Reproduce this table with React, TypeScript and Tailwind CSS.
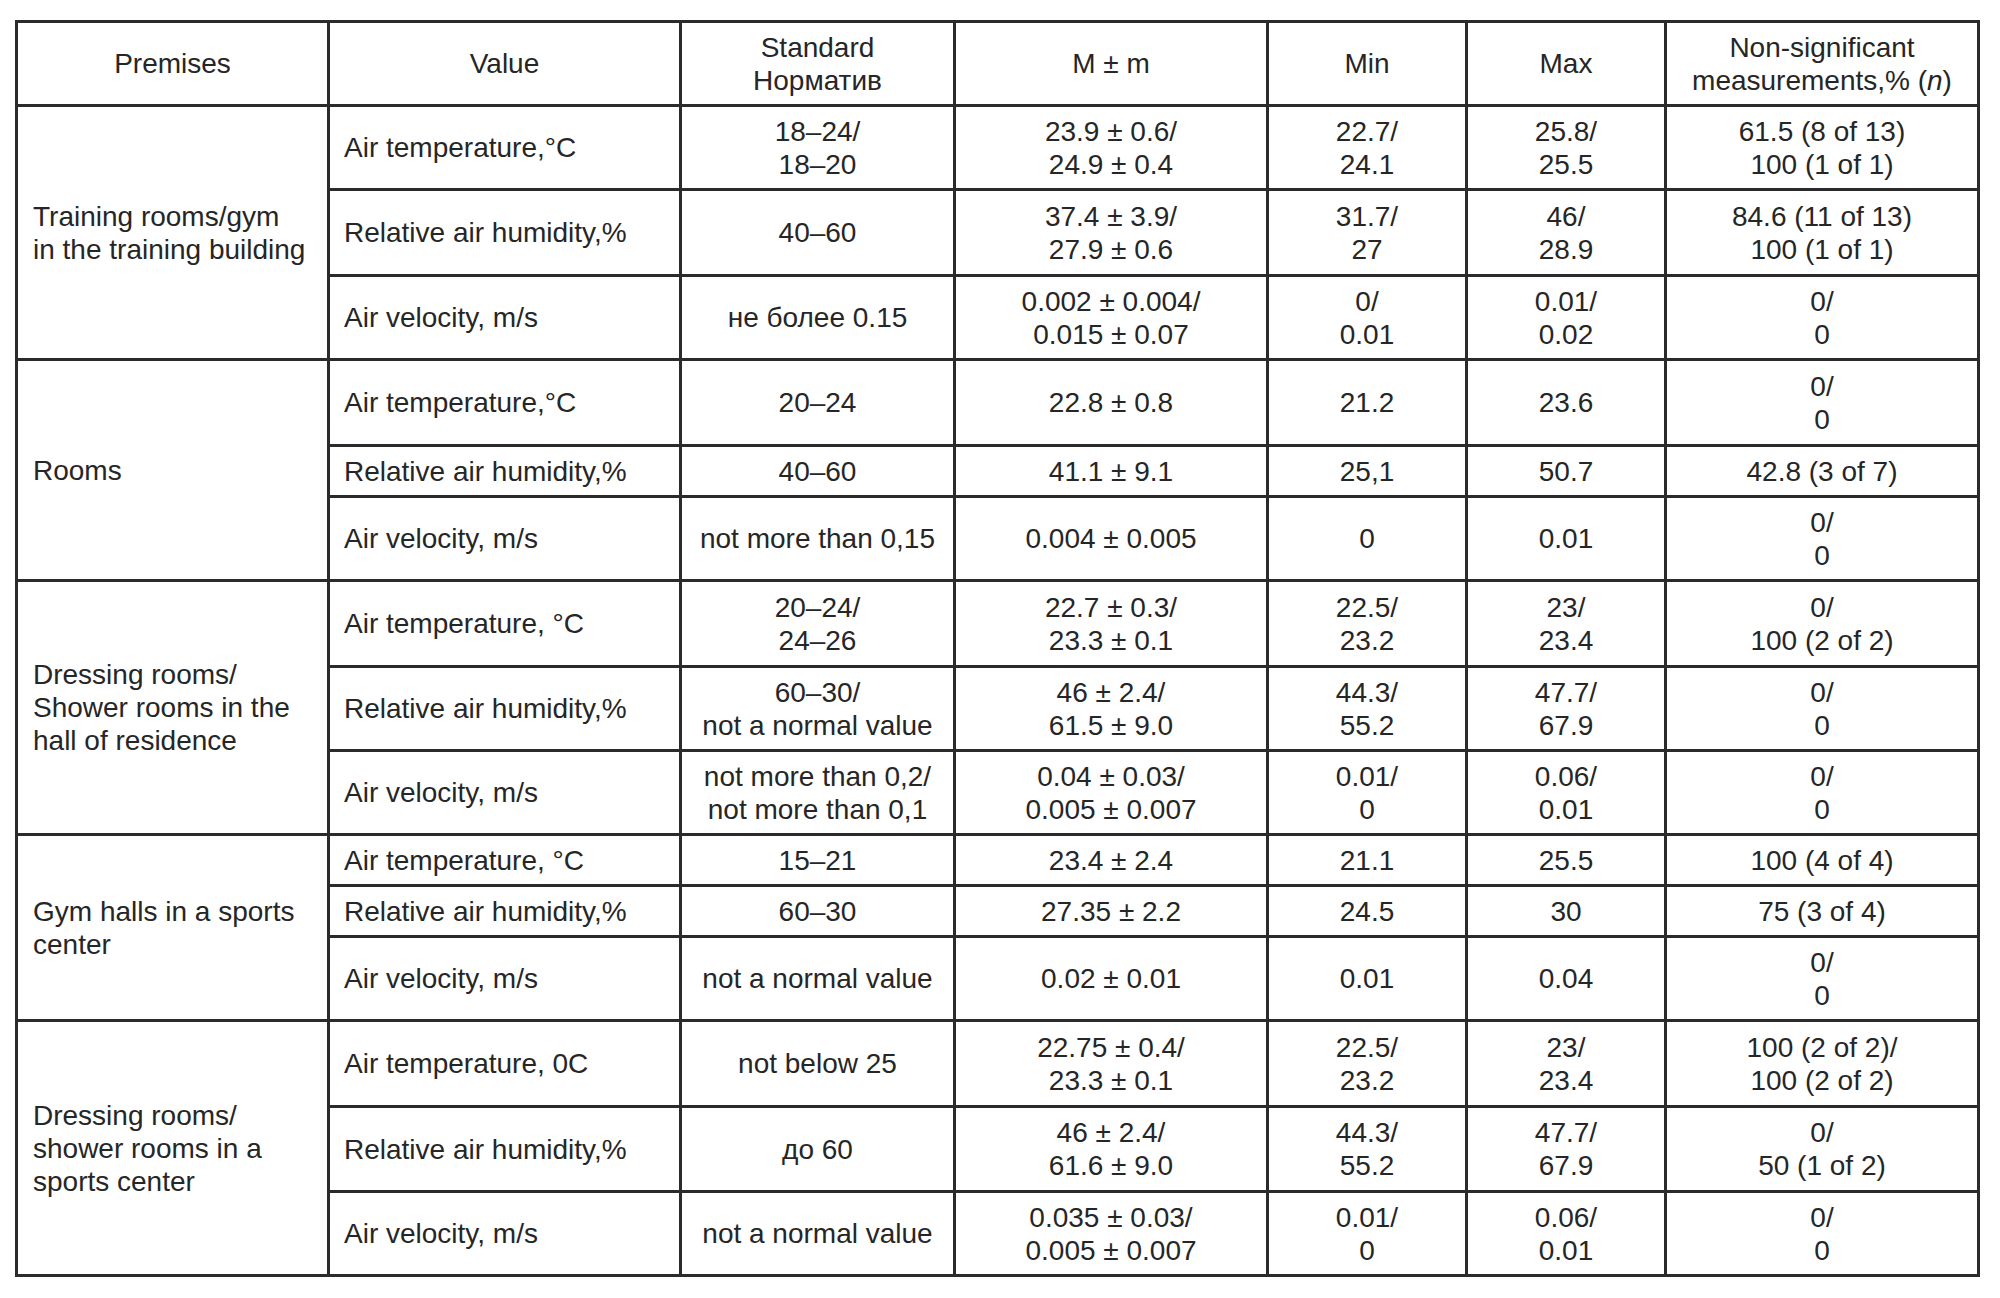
import React from 'react';

// ─── Data ───────────────────────────────────────────────────────────────────
interface MeasureRow {
  value: string;
  standard: string[];
  mean: string[];
  min: string[];
  max: string[];
  nonSig: string[];
  h: string;
}

interface PremisesGroup {
  name: string[];
  rows: MeasureRow[];
}

const groups: PremisesGroup[] = [
  {
    name: ['Training rooms/gym', 'in the training building'],
    rows: [
      { value: 'Air temperature,°C', standard: ['18–24/', '18–20'], mean: ['23.9 ± 0.6/', '24.9 ± 0.4'], min: ['22.7/', '24.1'], max: ['25.8/', '25.5'], nonSig: ['61.5 (8 of 13)', '100 (1 of 1)'], h: 'h-[84px]' },
      { value: 'Relative air humidity,%', standard: ['40–60'], mean: ['37.4 ± 3.9/', '27.9 ± 0.6'], min: ['31.7/', '27'], max: ['46/', '28.9'], nonSig: ['84.6 (11 of 13)', '100 (1 of 1)'], h: 'h-[86px]' },
      { value: 'Air velocity, m/s', standard: ['не более 0.15'], mean: ['0.002 ± 0.004/', '0.015 ± 0.07'], min: ['0/', '0.01'], max: ['0.01/', '0.02'], nonSig: ['0/', '0'], h: 'h-[84px]' },
    ],
  },
  {
    name: ['Rooms'],
    rows: [
      { value: 'Air temperature,°C', standard: ['20–24'], mean: ['22.8 ± 0.8'], min: ['21.2'], max: ['23.6'], nonSig: ['0/', '0'], h: 'h-[86px]' },
      { value: 'Relative air humidity,%', standard: ['40–60'], mean: ['41.1 ± 9.1'], min: ['25,1'], max: ['50.7'], nonSig: ['42.8 (3 of 7)'], h: 'h-[51px]' },
      { value: 'Air velocity, m/s', standard: ['not more than 0,15'], mean: ['0.004 ± 0.005'], min: ['0'], max: ['0.01'], nonSig: ['0/', '0'], h: 'h-[84px]' },
    ],
  },
  {
    name: ['Dressing rooms/', 'Shower rooms in the', 'hall of residence'],
    rows: [
      { value: 'Air temperature, °C', standard: ['20–24/', '24–26'], mean: ['22.7 ± 0.3/', '23.3 ± 0.1'], min: ['22.5/', '23.2'], max: ['23/', '23.4'], nonSig: ['0/', '100 (2 of 2)'], h: 'h-[86px]' },
      { value: 'Relative air humidity,%', standard: ['60–30/', 'not a normal value'], mean: ['46 ± 2.4/', '61.5 ± 9.0'], min: ['44.3/', '55.2'], max: ['47.7/', '67.9'], nonSig: ['0/', '0'], h: 'h-[84px]' },
      { value: 'Air velocity, m/s', standard: ['not more than 0,2/', 'not more than 0,1'], mean: ['0.04 ± 0.03/', '0.005 ± 0.007'], min: ['0.01/', '0'], max: ['0.06/', '0.01'], nonSig: ['0/', '0'], h: 'h-[84px]' },
    ],
  },
  {
    name: ['Gym halls in a sports', 'center'],
    rows: [
      { value: 'Air temperature, °C', standard: ['15–21'], mean: ['23.4 ± 2.4'], min: ['21.1'], max: ['25.5'], nonSig: ['100 (4 of 4)'], h: 'h-[51px]' },
      { value: 'Relative air humidity,%', standard: ['60–30'], mean: ['27.35 ± 2.2'], min: ['24.5'], max: ['30'], nonSig: ['75 (3 of 4)'], h: 'h-[51px]' },
      { value: 'Air velocity, m/s', standard: ['not a normal value'], mean: ['0.02 ± 0.01'], min: ['0.01'], max: ['0.04'], nonSig: ['0/', '0'], h: 'h-[84px]' },
    ],
  },
  {
    name: ['Dressing rooms/', 'shower rooms in a', 'sports center'],
    rows: [
      { value: 'Air temperature, 0C', standard: ['not below 25'], mean: ['22.75 ± 0.4/', '23.3 ± 0.1'], min: ['22.5/', '23.2'], max: ['23/', '23.4'], nonSig: ['100 (2 of 2)/', '100 (2 of 2)'], h: 'h-[86px]' },
      { value: 'Relative air humidity,%', standard: ['до 60'], mean: ['46 ± 2.4/', '61.6 ± 9.0'], min: ['44.3/', '55.2'], max: ['47.7/', '67.9'], nonSig: ['0/', '50 (1 of 2)'], h: 'h-[85px]' },
      { value: 'Air velocity, m/s', standard: ['not a normal value'], mean: ['0.035 ± 0.03/', '0.005 ± 0.007'], min: ['0.01/', '0'], max: ['0.06/', '0.01'], nonSig: ['0/', '0'], h: 'h-[84px]' },
    ],
  },
];

// ─── Cells ──────────────────────────────────────────────────────────────────
const cellBase = 'border-[3px] border-[#2b2b2b] align-middle p-0';

function Lines({ lines }: { lines: string[] }) {
  return (
    <>
      {lines.map((l, i) => (
        <div key={i}>{l}</div>
      ))}
    </>
  );
}

function Center({ lines }: { lines: string[] }) {
  return (
    <td className={`${cellBase} text-center`}>
      <Lines lines={lines} />
    </td>
  );
}

export default function App() {
  return (
    <div className="min-h-[1298px] w-[2000px] bg-white pl-[15px] pt-[20px]">
      <table
        className="table-fixed border-collapse w-[1965px] text-[28px] leading-[33px] text-[#262626]"
        style={{ fontFamily: '"Liberation Sans", Arial, sans-serif' }}
      >
        <colgroup>
          <col className="w-[312px]" />
          <col className="w-[352px]" />
          <col className="w-[274px]" />
          <col className="w-[313px]" />
          <col className="w-[199px]" />
          <col className="w-[199px]" />
          <col className="w-[313px]" />
        </colgroup>
        <thead>
          <tr className="h-[84px]">
            <th className={`${cellBase} font-normal text-center`}>Premises</th>
            <th className={`${cellBase} font-normal text-center`}>Value</th>
            <th className={`${cellBase} font-normal text-center`}>
              <div>Standard</div>
              <div>Норматив</div>
            </th>
            <th className={`${cellBase} font-normal text-center`}>M ± m</th>
            <th className={`${cellBase} font-normal text-center`}>Min</th>
            <th className={`${cellBase} font-normal text-center`}>Max</th>
            <th className={`${cellBase} font-normal text-center`}>
              <div>Non-significant</div>
              <div>
                measurements,% (<i>n</i>)
              </div>
            </th>
          </tr>
        </thead>
        <tbody>
          {groups.map((g) =>
            g.rows.map((r, i) => (
              <tr key={g.name.join() + i} className={r.h}>
                {i === 0 && (
                  <td rowSpan={g.rows.length} className={`${cellBase} text-left pl-[15px]`}>
                    <Lines lines={g.name} />
                  </td>
                )}
                <td className={`${cellBase} text-left pl-[14px]`}>{r.value}</td>
                <Center lines={r.standard} />
                <Center lines={r.mean} />
                <Center lines={r.min} />
                <Center lines={r.max} />
                <Center lines={r.nonSig} />
              </tr>
            ))
          )}
        </tbody>
      </table>
    </div>
  );
}
